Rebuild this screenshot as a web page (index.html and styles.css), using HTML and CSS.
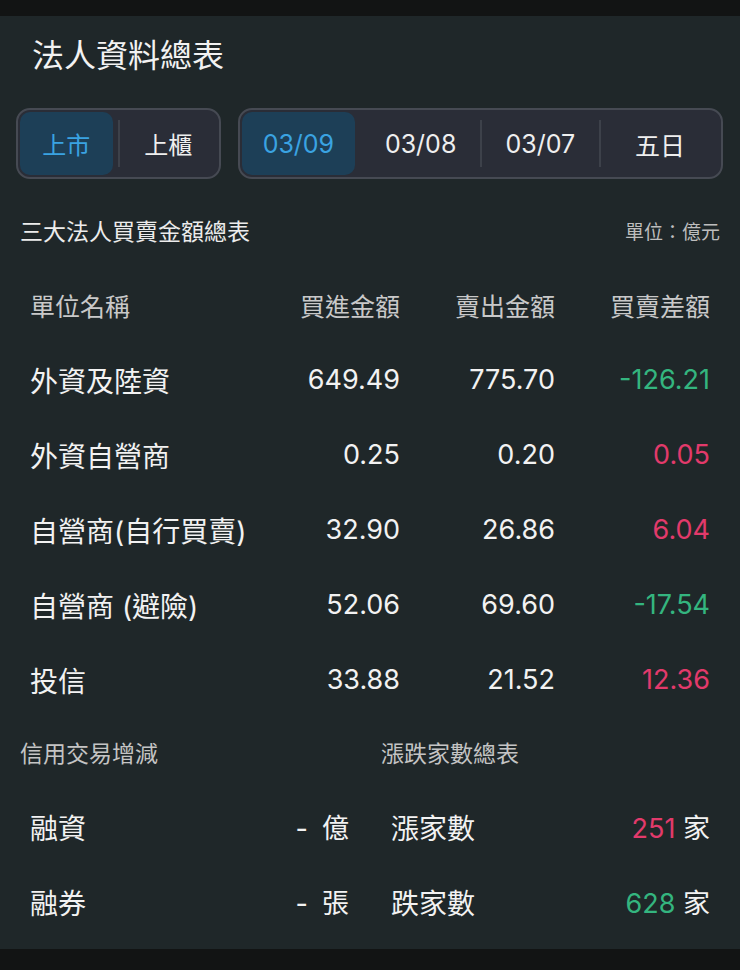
FILE: index.html
```html
<!DOCTYPE html>
<html lang="zh-Hant">
<head>
<meta charset="utf-8">
<title>法人資料總表</title>
<link rel="stylesheet" href="styles.css">
</head>
<body>
<div class="topbar"></div>
<main class="panel">
  <h1 class="title">法人資料總表</h1>

  <div class="seg-row">
    <div class="seg seg-market">
      <div class="seg-item active"><span class="seg-inner">上市</span></div>
      <div class="seg-sep"></div>
      <div class="seg-item"><span class="seg-inner">上櫃</span></div>
    </div>
    <div class="seg seg-date">
      <div class="seg-item active"><span class="seg-inner">03/09</span></div>
      <div class="seg-sep hidden"></div>
      <div class="seg-item"><span class="seg-inner">03/08</span></div>
      <div class="seg-sep"></div>
      <div class="seg-item"><span class="seg-inner">03/07</span></div>
      <div class="seg-sep"></div>
      <div class="seg-item"><span class="seg-inner">五日</span></div>
    </div>
  </div>

  <div class="section-head">
    <span class="section-title">三大法人買賣金額總表</span>
    <span class="unit">單位：億元</span>
  </div>

  <div class="table">
    <div class="row head">
      <span class="name">單位名稱</span>
      <span class="num">買進金額</span>
      <span class="num">賣出金額</span>
      <span class="num">買賣差額</span>
    </div>
    <div class="row">
      <span class="name">外資及陸資</span>
      <span class="num">649.49</span>
      <span class="num">775.70</span>
      <span class="num down">-126.21</span>
    </div>
    <div class="row">
      <span class="name">外資自營商</span>
      <span class="num">0.25</span>
      <span class="num">0.20</span>
      <span class="num up">0.05</span>
    </div>
    <div class="row">
      <span class="name">自營商(自行買賣)</span>
      <span class="num">32.90</span>
      <span class="num">26.86</span>
      <span class="num up">6.04</span>
    </div>
    <div class="row">
      <span class="name">自營商 (避險)</span>
      <span class="num">52.06</span>
      <span class="num">69.60</span>
      <span class="num down">-17.54</span>
    </div>
    <div class="row">
      <span class="name">投信</span>
      <span class="num">33.88</span>
      <span class="num">21.52</span>
      <span class="num up">12.36</span>
    </div>
  </div>

  <div class="bottom">
    <div class="block block-left">
      <div class="block-head">信用交易增減</div>
      <div class="brow"><span class="name">融資</span><span class="val"><span class="dash">-</span>億</span></div>
      <div class="brow"><span class="name">融券</span><span class="val"><span class="dash">-</span>張</span></div>
    </div>
    <div class="block block-right">
      <div class="block-head">漲跌家數總表</div>
      <div class="brow"><span class="name">漲家數</span><span class="val"><span class="up">251</span> 家</span></div>
      <div class="brow"><span class="name">跌家數</span><span class="val"><span class="down">628</span> 家</span></div>
    </div>
  </div>
</main>
</body>
</html>
```

FILE: styles.css
```css
* { box-sizing: border-box; }

html, body {
  margin: 0;
  padding: 0;
  background: #121414;
}

body {
  width: 740px;
  height: 970px;
  overflow: hidden;
  font-family: "Inter", "Noto Sans CJK TC", sans-serif;
  color: #f0f0f0;
}

.topbar {
  height: 16px;
  background: #121414;
}

.panel {
  background: #1f2729;
  padding: 0 0 10px 0;
}

.title {
  margin: 0;
  padding: 20px 0 0 32px;
  font-size: 32px;
  line-height: 40px;
  font-weight: 400;
  color: #f2f2f2;
}

.seg-row {
  display: flex;
  gap: 17px;
  margin-top: 32px;
  padding: 0 17px 0 16px;
}

.seg {
  display: flex;
  height: 71px;
  padding: 2px;
  border: 2px solid #464a53;
  border-radius: 14px;
  background: #2a2d37;
}

.seg-market { width: 205px; }
.seg-date { flex: 1; }

.seg-item {
  flex: 1;
  display: flex;
}

.seg-inner {
  flex: 1;
  display: flex;
  align-items: center;
  justify-content: center;
  font-size: 24px;
  color: #efefef;
  border-radius: 10px;
}

.seg-date .seg-inner { font-size: 25px; }

.seg-item.active .seg-inner {
  background: #1d3f57;
  color: #3aa3e2;
  margin-right: 5px;
}

.seg-sep {
  width: 2px;
  margin: 8px 0;
  background: #3d414a;
}

.seg-sep.hidden { background: transparent; }

.section-head {
  display: flex;
  justify-content: space-between;
  align-items: center;
  margin-top: 36px;
  padding: 0 20px;
  height: 30px;
}

.section-title {
  font-size: 23px;
  color: #ececec;
}

.unit {
  font-size: 19px;
  color: #bdbdbd;
}

.table {
  margin-top: 22px;
  padding: 0 30px;
}

.row {
  display: grid;
  grid-template-columns: 1fr 130px 155px 155px;
  align-items: center;
  height: 75px;
}

.row .name {
  font-size: 28px;
  color: #f2f2f2;
}

.row .num {
  text-align: right;
  font-size: 27px;
  color: #f2f2f2;
}

.row.head .name,
.row.head .num {
  font-size: 25px;
  color: #c9c9c9;
}

.up { color: #e23a6b !important; }
.down { color: #34b57f !important; }

.bottom {
  display: grid;
  grid-template-columns: 341px 1fr;
  column-gap: 20px;
  margin-top: -3px;
  padding: 0 20px;
}

.block-head {
  height: 75px;
  display: flex;
  align-items: center;
  font-size: 23px;
  color: #c4c4c4;
}

.brow {
  height: 75px;
  display: flex;
  justify-content: space-between;
  align-items: center;
  font-size: 28px;
  color: #f2f2f2;
}

.block-left .brow { padding: 0 12px 0 10px; }
.block-right .brow { padding: 0 10px 0 10px; }

.brow .val { font-size: 27px; }
.brow .dash { margin-right: 14px; }
```
